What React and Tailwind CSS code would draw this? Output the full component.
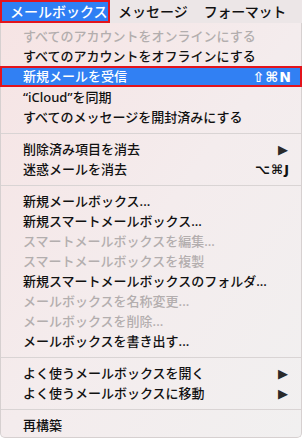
import React from "react";

const Item = ({ children, disabled, right }) => (
  <div
    className={`h-[20px] flex items-center pl-[22px] pr-[10px] text-[13px] leading-none font-medium ${
      disabled ? "text-[#b3aeae]" : "text-[#111]"
    }`}
  >
    <span className="flex-1">{children}</span>
    {right}
  </div>
);

const Sep = () => (
  <div className="h-[12px] flex items-center">
    <div className="h-px w-full bg-[#d9d4d4]" />
  </div>
);

const Arrow = () => (
  <span className="text-[13px] text-[#2a2a2a] font-['DejaVu_Sans'] mr-[3px]">▶</span>
);

export default function App() {
  return (
    <div className="w-[302px] h-[440px] overflow-hidden bg-white font-['Noto_Sans','Noto_Sans_CJK_JP',sans-serif]">
      <div className="h-[23px] flex items-center bg-[#ece6e7] text-[14px] text-[#111] font-medium">
        <div className="h-[23px] w-[110px] bg-[#2f7ff4] border-2 border-[#e3141c] text-white flex items-center pl-[8px] leading-none">
          メールボックス
        </div>
        <div className="ml-[8px] leading-none">メッセージ</div>
        <div className="ml-[16px] leading-none tracking-[-0.3px]">フォーマット</div>
      </div>
      <div className="h-[415px] pt-[3px] border-x border-b border-[#d6d0d0] rounded-b-[5px] bg-gradient-to-br from-[#f6e4e4] via-[#f4eced] to-[#f1f0f0]">
        <Item disabled>すべてのアカウントをオンラインにする</Item>
        <Item>すべてのアカウントをオフラインにする</Item>
        <div className="-mx-px h-[21px] flex items-center pl-[21px] pr-[8px] bg-[#3180f3] border-2 border-[#e3141c] text-white text-[13px] leading-none font-medium">
          <span className="flex-1">新規メールを受信</span>
          <span className="font-['DejaVu_Sans'] text-[14px] font-bold tracking-[1px]">⇧⌘N</span>
        </div>
        <Item>“iCloud”を同期</Item>
        <Item>すべてのメッセージを開封済みにする</Item>
        <Sep />
        <Item right={<Arrow />}>削除済み項目を消去</Item>
        <Item
          right={
            <span className="font-['DejaVu_Sans'] text-[13px] font-bold tracking-[1px] mr-[1px]">⌥⌘J</span>
          }
        >
          迷惑メールを消去
        </Item>
        <Sep />
        <Item>新規メールボックス...</Item>
        <Item>新規スマートメールボックス...</Item>
        <Item disabled>スマートメールボックスを編集...</Item>
        <Item disabled>スマートメールボックスを複製</Item>
        <Item>新規スマートメールボックスのフォルダ...</Item>
        <Item disabled>メールボックスを名称変更...</Item>
        <Item disabled>メールボックスを削除...</Item>
        <Item>メールボックスを書き出す...</Item>
        <Sep />
        <Item right={<Arrow />}>よく使うメールボックスを開く</Item>
        <Item right={<Arrow />}>よく使うメールボックスに移動</Item>
        <Sep />
        <Item>再構築</Item>
      </div>
    </div>
  );
}
